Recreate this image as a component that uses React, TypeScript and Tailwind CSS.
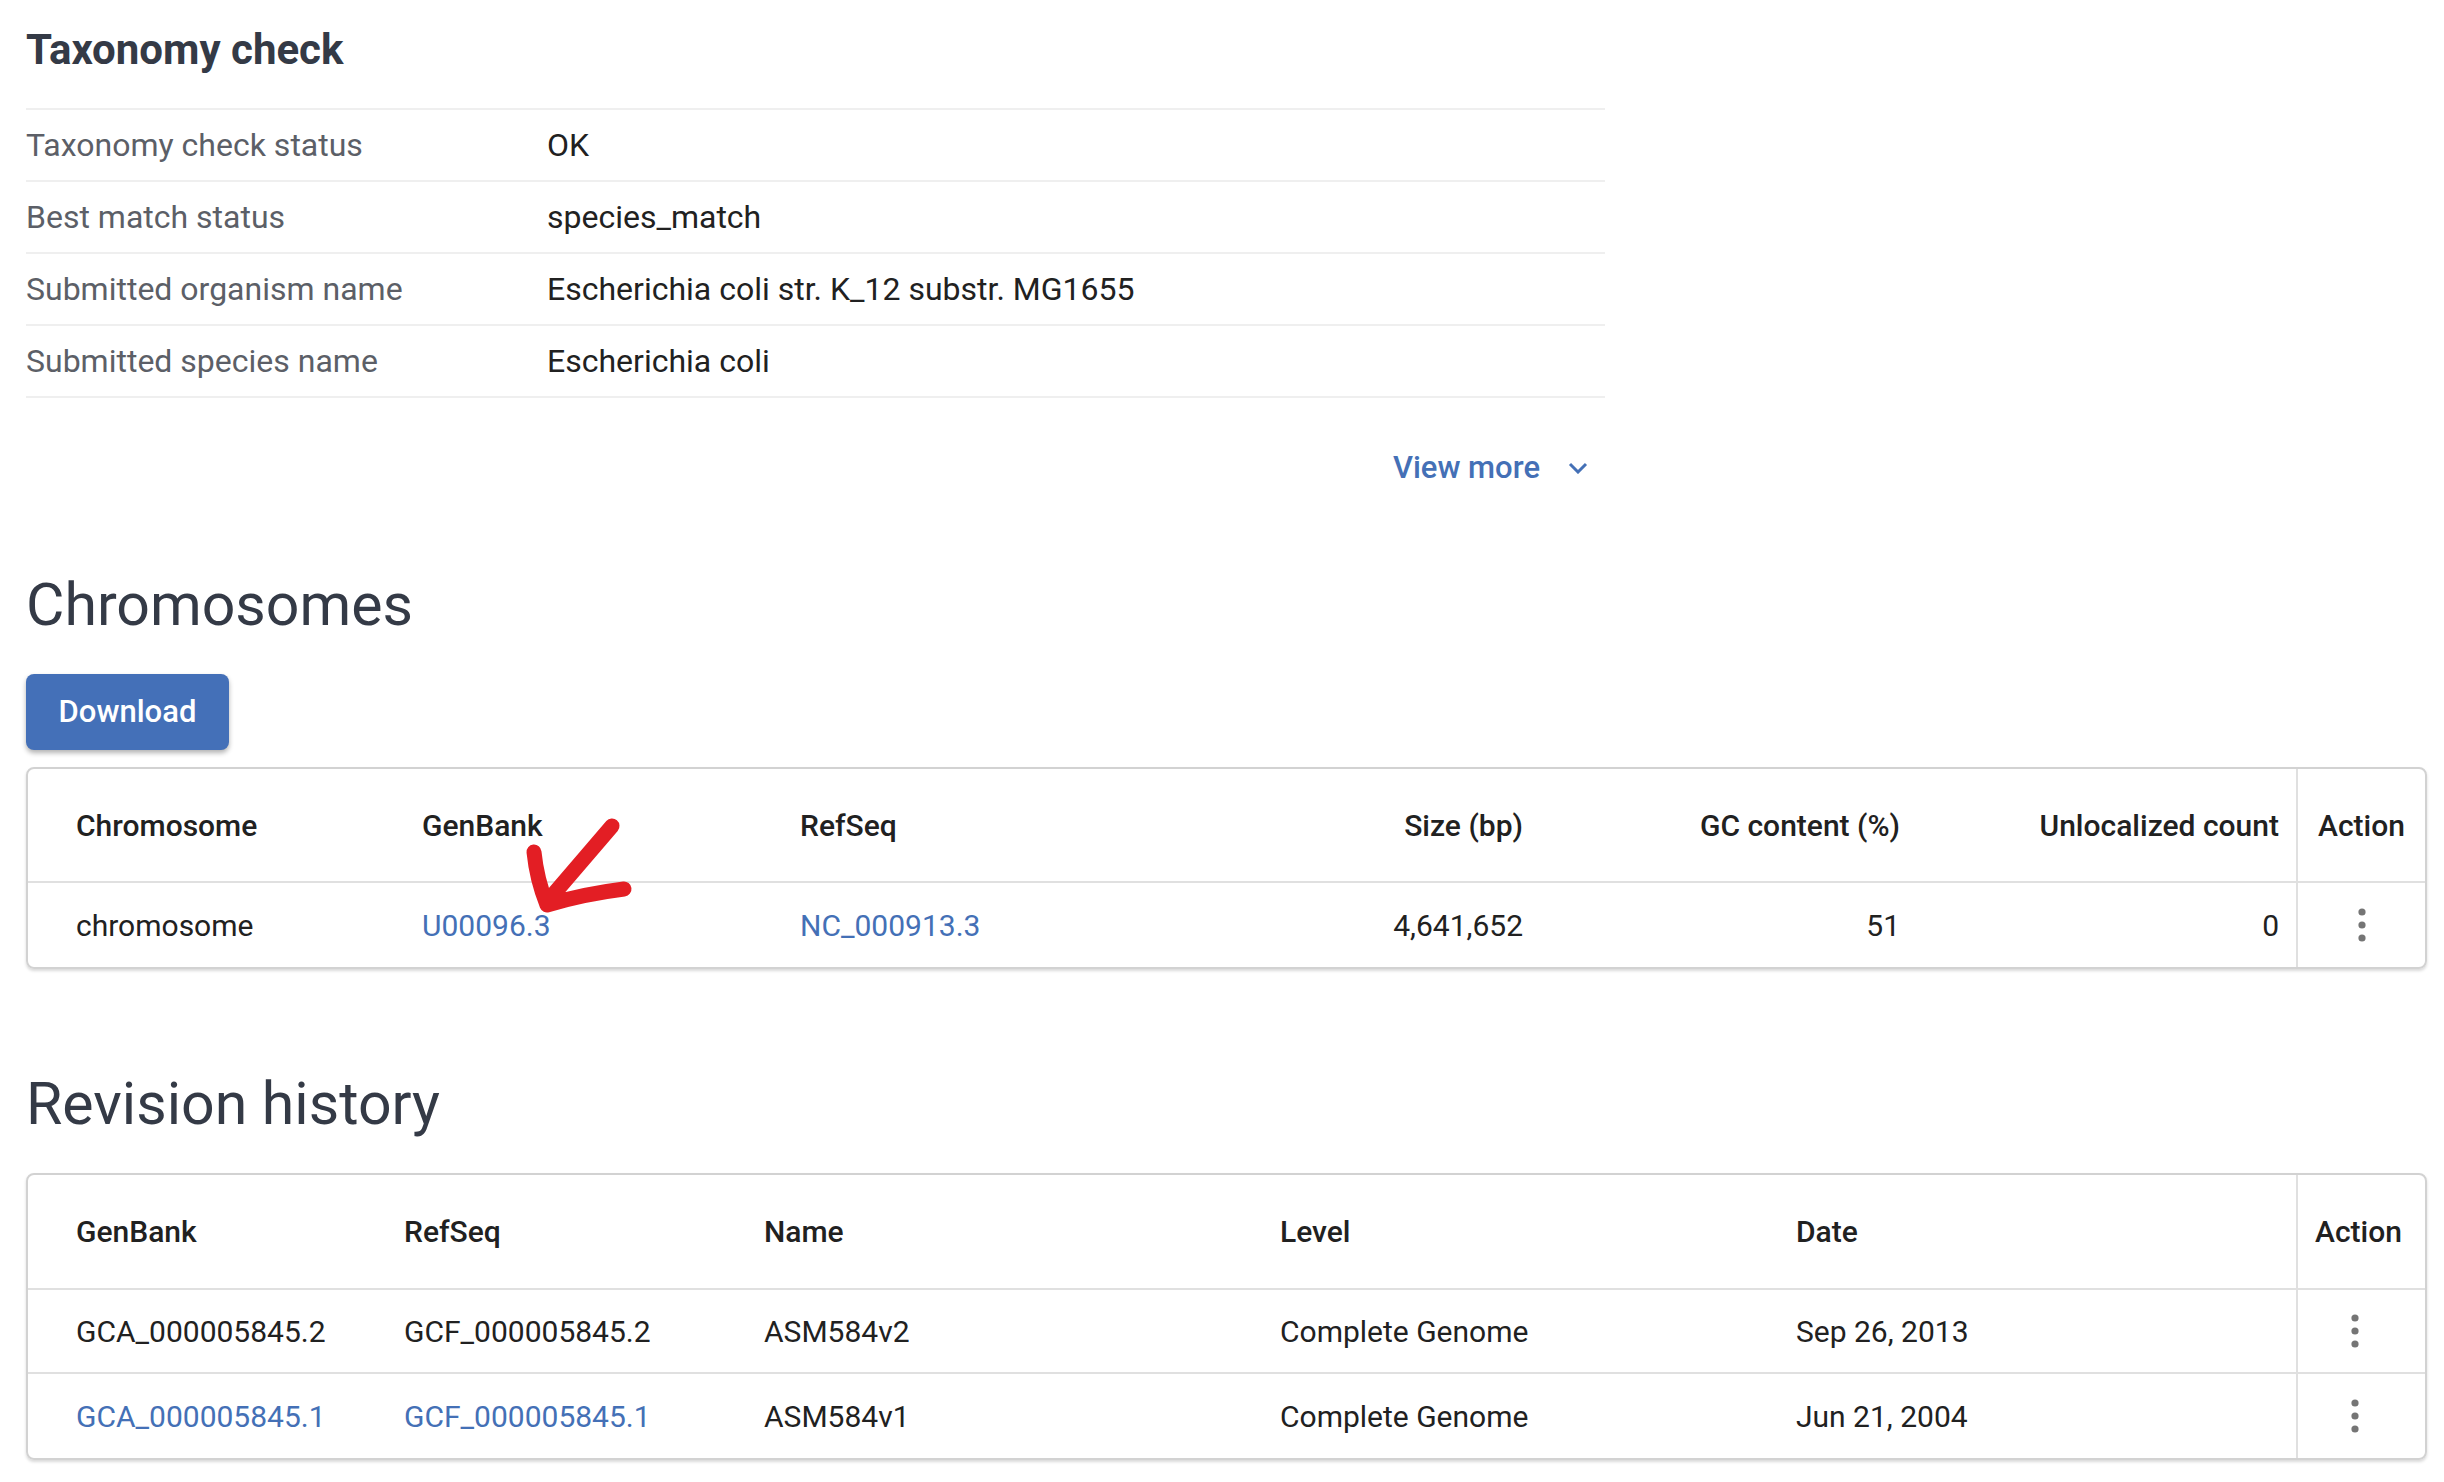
import React from "react";

const Kebab = () => (
  <svg width="10" height="36" viewBox="0 0 10 36" className="block">
    <circle cx="5" cy="5" r="3.6" fill="#757575" />
    <circle cx="5" cy="18" r="3.6" fill="#757575" />
    <circle cx="5" cy="31" r="3.6" fill="#757575" />
  </svg>
);

const kv: [string, string][] = [
  ["Taxonomy check status", "OK"],
  ["Best match status", "species_match"],
  ["Submitted organism name", "Escherichia coli str. K_12 substr. MG1655"],
  ["Submitted species name", "Escherichia coli"],
];

export default function App() {
  return (
    <div
      className="relative min-h-[1482px] w-[2444px] bg-white pl-[26px] text-[30px] text-[#212121]"
      style={{ fontFamily: "Roboto, 'Liberation Sans', sans-serif" }}
    >
      {/* Taxonomy check */}
      <div className="h-[108px] pt-[26px]">
        <h2 className="text-[42px] font-bold leading-[48px] text-[#343a46]">Taxonomy check</h2>
      </div>
      <div className="w-[1579px] border-b-2 border-[#efefef] text-[32px]">
        {kv.map(([k, v]) => (
          <div key={k} className="flex h-[72px] items-center border-t-2 border-[#efefef]">
            <div className="w-[521px] text-[#5c5f67]">{k}</div>
            <div className="text-[#212121]">{v}</div>
          </div>
        ))}
      </div>
      <div className="flex h-[140px] w-[1579px] items-center justify-end pr-[17px]">
        <span className="text-[31px] font-medium text-[#4470b6]">View more</span>
        <svg width="20" height="12" viewBox="0 0 20 12" className="ml-[28px]">
          <path d="M2 2 L10 10 L18 2" fill="none" stroke="#4470b6" strokeWidth="3" />
        </svg>
      </div>

      {/* Chromosomes */}
      <div className="mt-[32px] h-[70px]">
        <h2 className="text-[59px] leading-[70px] text-[#343a46]">Chromosomes</h2>
      </div>
      <div className="mt-[34px]">
        <button className="h-[76px] w-[203px] rounded-[8px] bg-[#4470b8] text-[31px] font-medium text-white shadow-[0_3px_5px_rgba(0,0,0,0.3)]">
          Download
        </button>
      </div>
      <div className="mt-[17px] w-[2401px] overflow-hidden rounded-[8px] border-2 border-[#d2d2d2] shadow-[0_2px_3px_rgba(0,0,0,0.15)]">
        <div className="grid h-[114px] grid-cols-[370px_378px_374px_397px_377px_372px_129px] items-stretch border-b-2 border-[#e0e0e0] font-medium">
          <div className="flex items-center pl-[48px]">Chromosome</div>
          <div className="flex items-center pl-[24px]">GenBank</div>
          <div className="flex items-center pl-[24px]">RefSeq</div>
          <div className="flex items-center justify-end pr-[24px]">Size (bp)</div>
          <div className="flex items-center justify-end pr-[24px]">GC content (%)</div>
          <div className="flex items-center justify-end pr-[17px]">Unlocalized count</div>
          <div className="flex items-center border-l-2 border-[#e0e0e0] pl-[20px]">Action</div>
        </div>
        <div className="grid h-[84px] grid-cols-[370px_378px_374px_397px_377px_372px_129px] items-stretch">
          <div className="flex items-center pl-[48px]">chromosome</div>
          <div className="flex items-center pl-[24px] text-[#4470b6]">U00096.3</div>
          <div className="flex items-center pl-[24px] text-[#4470b6]">NC_000913.3</div>
          <div className="flex items-center justify-end pr-[24px]">4,641,652</div>
          <div className="flex items-center justify-end pr-[24px]">51</div>
          <div className="flex items-center justify-end pr-[17px]">0</div>
          <div className="flex items-center justify-center border-l-2 border-[#e0e0e0]">
            <Kebab />
          </div>
        </div>
      </div>

      {/* Revision history */}
      <div className="mt-[100px] h-[70px]">
        <h2 className="text-[59px] leading-[70px] text-[#343a46]">Revision history</h2>
      </div>
      <div className="mt-[34px] w-[2401px] overflow-hidden rounded-[8px] border-2 border-[#d2d2d2] shadow-[0_2px_3px_rgba(0,0,0,0.15)]">
        <div className="grid h-[115px] grid-cols-[352px_360px_516px_516px_524px_129px] border-b-2 border-[#e0e0e0] font-medium">
          <div className="flex items-center pl-[48px]">GenBank</div>
          <div className="flex items-center pl-[24px]">RefSeq</div>
          <div className="flex items-center pl-[24px]">Name</div>
          <div className="flex items-center pl-[24px]">Level</div>
          <div className="flex items-center pl-[24px]">Date</div>
          <div className="flex items-center border-l-2 border-[#e0e0e0] pl-[17px]">Action</div>
        </div>
        {[
          ["GCA_000005845.2", "GCF_000005845.2", "ASM584v2", "Complete Genome", "Sep 26, 2013", false],
          ["GCA_000005845.1", "GCF_000005845.1", "ASM584v1", "Complete Genome", "Jun 21, 2004", true],
        ].map((r, i) => (
          <div
            key={i}
            className={`grid h-[84px] grid-cols-[352px_360px_516px_516px_524px_129px] ${i === 0 ? "border-b-2 border-[#e0e0e0]" : ""}`}
          >
            <div className={`flex items-center pl-[48px] ${r[5] ? "text-[#4470b6]" : ""}`}>{r[0] as string}</div>
            <div className={`flex items-center pl-[24px] ${r[5] ? "text-[#4470b6]" : ""}`}>{r[1] as string}</div>
            <div className="flex items-center pl-[24px]">{r[2] as string}</div>
            <div className="flex items-center pl-[24px]">{r[3] as string}</div>
            <div className="flex items-center pl-[24px]">{r[4] as string}</div>
            <div className="flex items-center border-l-2 border-[#e0e0e0] pl-[17px]">
              <div className="flex w-[80px] justify-center">
                <Kebab />
              </div>
            </div>
          </div>
        ))}
      </div>

      {/* Red arrow annotation */}
      <svg
        className="pointer-events-none absolute left-0 top-0"
        width="2444"
        height="1482"
        viewBox="0 0 2444 1482"
      >
        <path
          d="M612 826 L552 896 M534 852 C536 872 541 890 547 905 C570 898 600 892 624 889"
          fill="none"
          stroke="#e31e24"
          strokeWidth="15"
          strokeLinecap="round"
          strokeLinejoin="round"
        />
      </svg>
    </div>
  );
}
